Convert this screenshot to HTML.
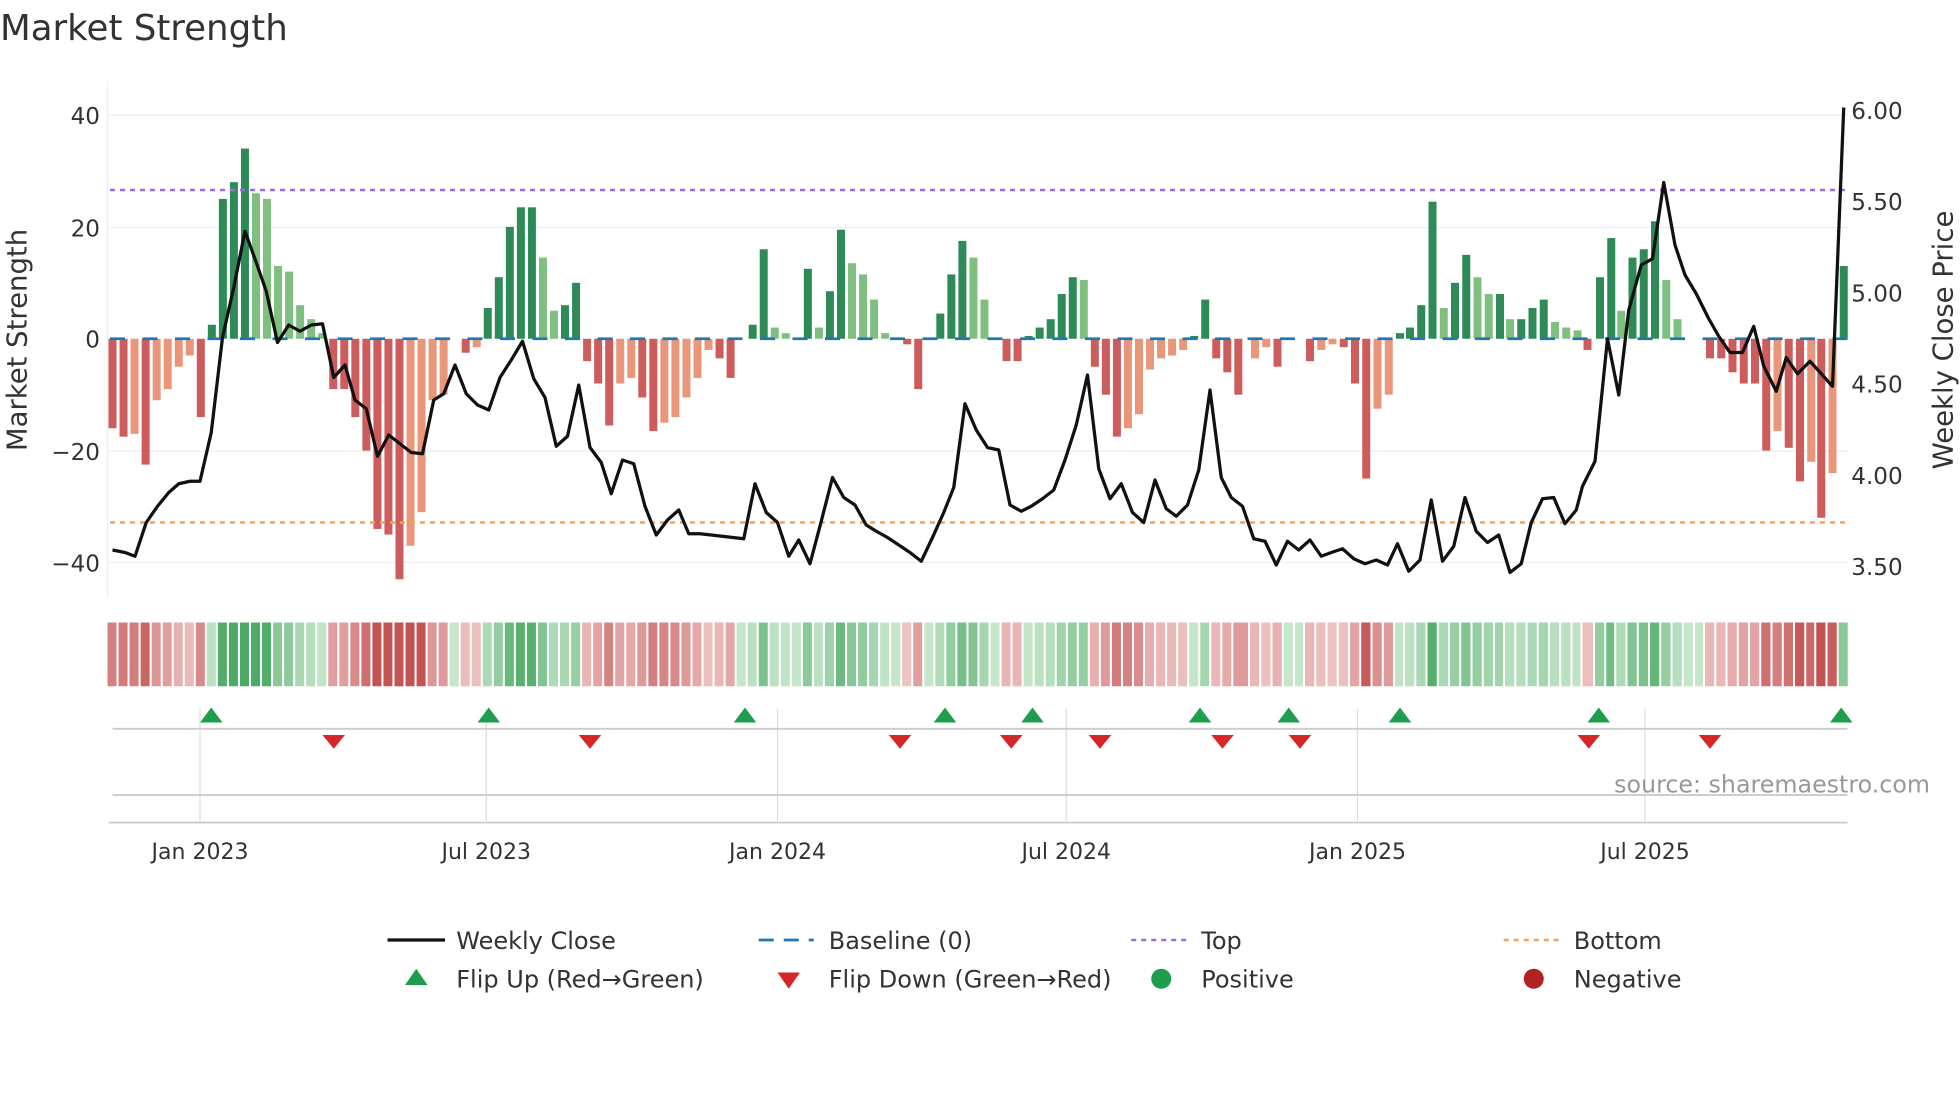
<!DOCTYPE html>
<html><head><meta charset="utf-8"><style>
html,body{margin:0;padding:0;background:#fff;width:1960px;height:1102px;overflow:hidden}
svg{display:block;font-family:"DejaVu Sans","Liberation Sans",sans-serif}
</style></head><body>
<svg id="s" width="1960" height="1102" viewBox="0 0 1568 881.6" xmlns="http://www.w3.org/2000/svg">
<rect width="1568" height="882" fill="#fff"/>
<text x="0" y="32" font-size="28.5" fill="#333">Market Strength</text>
<g stroke="#eceef2" stroke-width="1">
<line x1="87" y1="92" x2="1478" y2="92"/><line x1="87" y1="182" x2="1478" y2="182"/>
<line x1="87" y1="361" x2="1478" y2="361"/><line x1="87" y1="450" x2="1478" y2="450"/>
<line x1="86" y1="65" x2="86" y2="478"/>
</g>
<g font-size="18.5" fill="#333" text-anchor="end">
<text x="80" y="99">40</text><text x="80" y="189">20</text><text x="80" y="278">0</text>
<text x="80" y="368">−20</text><text x="80" y="457">−40</text>
</g>
<g font-size="18.5" fill="#333">
<text x="1481" y="95">6.00</text><text x="1481" y="168">5.50</text><text x="1481" y="241">5.00</text>
<text x="1481" y="314">4.50</text><text x="1481" y="387">4.00</text><text x="1481" y="460">3.50</text>
</g>
<text transform="translate(21,272) rotate(-90)" font-size="22" fill="#333" text-anchor="middle">Market Strength</text>
<text transform="translate(1562,272) rotate(-90)" font-size="22" fill="#333" text-anchor="middle">Weekly Close Price</text>
<g id="bars"></g>
<g id="strip"></g>
<line x1="88" y1="271" x2="1478" y2="271" stroke="#1f77b4" stroke-width="2.2" stroke-dasharray="12,14"/>
<line x1="88" y1="152" x2="1478" y2="152" stroke="#9b6ee0" stroke-width="2" stroke-dasharray="4,4"/>
<line x1="88" y1="418" x2="1478" y2="418" stroke="#f3a15e" stroke-width="2" stroke-dasharray="4,4"/>
<polyline id="price" fill="none" stroke="#111" stroke-width="2.6" stroke-linejoin="round"/>
<g stroke="#ddd" stroke-width="1">
<line x1="160" y1="567" x2="160" y2="657"/><line x1="389" y1="567" x2="389" y2="657"/>
<line x1="622" y1="567" x2="622" y2="657"/><line x1="853" y1="567" x2="853" y2="657"/>
<line x1="1086" y1="567" x2="1086" y2="657"/><line x1="1316" y1="567" x2="1316" y2="657"/>
</g>
<line x1="90" y1="583" x2="1478" y2="583" stroke="#ccc" stroke-width="1.5"/>
<line x1="90" y1="636" x2="1478" y2="636" stroke="#ccc" stroke-width="1.5"/>
<line x1="87" y1="658" x2="1478" y2="658" stroke="#ccc" stroke-width="1.5"/>
<g id="tri"></g>
<text x="1544" y="634" font-size="19" fill="#999" text-anchor="end">source: sharemaestro.com</text>
<g font-size="17.6" fill="#333" text-anchor="middle">
<text x="160" y="687">Jan 2023</text><text x="389" y="687">Jul 2023</text><text x="622" y="687">Jan 2024</text>
<text x="853" y="687">Jul 2024</text><text x="1086" y="687">Jan 2025</text><text x="1316" y="687">Jul 2025</text>
</g>
<g font-size="19.2" fill="#333">
<line x1="310" y1="752" x2="356" y2="752" stroke="#111" stroke-width="2.6"/><text x="365" y="759">Weekly Close</text>
<line x1="607" y1="752" x2="651" y2="752" stroke="#1f77b4" stroke-width="2.2" stroke-dasharray="12,8"/><text x="663" y="759">Baseline (0)</text>
<line x1="905" y1="752" x2="949" y2="752" stroke="#9b6ee0" stroke-width="2" stroke-dasharray="4,4"/><text x="961" y="759">Top</text>
<line x1="1203" y1="752" x2="1247" y2="752" stroke="#f3a15e" stroke-width="2" stroke-dasharray="4,4"/><text x="1259" y="759">Bottom</text>
<polygon points="324,788 342,788 333,775" fill="#1e9e4a"/><text x="365" y="790">Flip Up (Red→Green)</text>
<polygon points="622,778 640,778 631,791" fill="#d62728"/><text x="663" y="790">Flip Down (Green→Red)</text>
<circle cx="929" cy="783" r="8" fill="#1e9e4a"/><text x="961" y="790">Positive</text>
<circle cx="1227" cy="783" r="8" fill="#b22222"/><text x="1259" y="790">Negative</text>
</g>
</svg>
<script>
var NS="http://www.w3.org/2000/svg";
function el(t,a,p){var e=document.createElementNS(NS,t);for(var k in a)e.setAttribute(k,a[k]);document.getElementById(p).appendChild(e);}
var v1=[-16,-17.5,-17,-22.5,-11,-9,-5,-3,-14,2.5,25,28,34,26,25,13,12,6,3.5,1,-9,-9,-14,-20,-34,-35,-43,-37,-31,-11,-10,0,-2.5,-1.5,5.5,11,20,23.5,23.5,14.5,5,6,10,-4,-8,-15.5,-8,-7,-10.5,-16.5,-15,-14,-10.5,-7,-2,-3.5,-7,0,2.5,16,2,1,0,12.5,2,8.5,19.5,13.5,11.5,7,1,0,-1,-9,0,4.5,11.5,17.5,14.5,7,0,-4,-4,0.5,2,3.5,8,11,10.5,-5,-10,-17.5,-16,-13.5,-5.5,-3.5,-3,-2,0.5,7,-3.5,-6,-10];
var pairs=[];for(var i=0;i<v1.length;i++)pairs.push([90+8.83*i,v1[i]]);
var rest=[[1004,-3.5],[1013,-1.5],[1022,-5],[1031,0],[1040,0],[1048,-4],[1057,-2],[1066,-1],[1075,-1.5],[1084,-8],[1093,-25],[1102,-12.5],[1111,-10],[1120,1],[1128,2],[1137,6],[1146,24.5],[1155,5.5],[1164,10],[1173,15],[1182,11],[1191,8],[1200,8],[1208,3.5],[1217,3.5],[1226,5.5],[1235,7],[1244,3],[1253,2],[1262,1.5],[1270,-2],[1280,11],[1289,18],[1297,5],[1306,14.5],[1315,16],[1324,21],[1333,10.5],[1342,3.5],[1351,0],[1360,0],[1368,-3.5],[1377,-3.5],[1386,-6],[1395,-8],[1404,-8],[1413,-20],[1422,-16.5],[1431,-19.5],[1440,-25.5],[1449,-22],[1457,-32],[1466,-24],[1475,13]];
pairs=pairs.concat(rest);
var Y0=271,K=4.475;
function mix(a,b,t){return "rgb("+[0,1,2].map(function(j){return Math.round(a[j]+(b[j]-a[j])*t)}).join(",")+")";}
for(var i=0;i<pairs.length;i++){
 var x=pairs[i][0],v=pairs[i][1],pv=i?pairs[i-1][1]:0;
 if(v!==0){var c;
  if(v>0)c=(v>=pv)?"#2e8b57":"#7fbf7f";else c=(v<=pv)?"#cd5c5c":"#e9967a";
  var h=Math.abs(v)*K;el("rect",{x:x-3.2,y:v>0?Y0-h:Y0,width:6.4,height:h,fill:c},"bars");}
 var nx=i<pairs.length-1?pairs[i+1][0]:x+8.8;var w=Math.max(nx-x-1.6,3);
 var t=Math.min(1,0.12+Math.abs(v)/30),col=v>=0?mix([214,238,216],[76,170,100],t):mix([245,214,214],[196,84,84],t);
 el("rect",{x:x-4,y:498,width:w,height:51,fill:col},"strip");
}
var up=[169,391,596,756,826,960,1031,1120,1279,1473],dn=[267,472,720,809,880,978,1040,1271,1368];
up.forEach(function(x){el("polygon",{points:(x-9)+",578 "+(x+9)+",578 "+x+",566",fill:"#1e9e4a"},"tri");});
dn.forEach(function(x){el("polygon",{points:(x-9)+",588 "+(x+9)+",588 "+x+",599",fill:"#d62728"},"tri");});
var P=[[90,440],[100,442],[108,445],[117,418],[126,405],[135,394],[143,387],[152,385],[160,385],[169,346],[178,270],[187,230],[196,185],[205,210],[213,233],[222,274],[231,260],[240,265],[249,260],[258,259],[267,302],[276,292],[284,320],[293,327],[302,365],[311,348],[320,355],[329,362],[338,363],[347,320],[355,315],[364,292],[373,315],[382,324],[391,328],[400,302],[409,288],[418,273],[427,303],[436,318],[445,357],[454,349],[463,308],[472,358],[481,370],[489,395],[498,368],[507,371],[516,405],[525,428],[534,416],[543,408],[551,427],[560,427],[569,428],[578,431],[587,387],[596,410],[605,418],[614,445],[622,432],[631,451],[640,417],[649,382],[658,398],[667,404],[676,420],[684,425],[693,430],[702,436],[711,442],[720,449],[729,430],[738,410],[746,390],[755,323],[764,344],[773,358],[782,360],[791,404],[800,409],[808,405],[817,399],[826,392],[835,368],[844,340],[853,300],[862,375],[871,399],[880,387],[889,410],[898,418],[907,384],[916,407],[924,413],[933,404],[942,376],[951,312],[960,382],[968,398],[977,405],[986,431],[995,433],[1004,452],[1013,433],[1022,440],[1031,432],[1040,445],[1048,442],[1057,439],[1066,447],[1075,451],[1084,448],[1093,452],[1101,435],[1110,457],[1119,448],[1128,400],[1137,449],[1146,437],[1155,398],[1164,425],[1173,434],[1182,428],[1191,458],[1200,451],[1208,418],[1217,399],[1226,398],[1235,419],[1244,408]];
var Q=[];P.forEach(function(p){if(p[0]<575)Q.push(p);else{var nx=p[0]+17;if(nx<1262)Q.push([nx,p[1]]);}});
Q=Q.concat([[1266,389],[1276,369],[1286,271],[1295,316],[1303,248],[1313,212],[1322,207],[1331,146],[1340,196],[1348,220],[1357,235],[1367,255],[1375,269],[1384,282],[1394,282],[1403,261],[1411,293],[1421,313],[1429,286],[1438,299],[1448,289],[1457,299],[1466,309],[1475,86]]);
document.getElementById("price").setAttribute("points",Q.map(function(p){return p.join(",")}).join(" "));
</script>
</body></html>
